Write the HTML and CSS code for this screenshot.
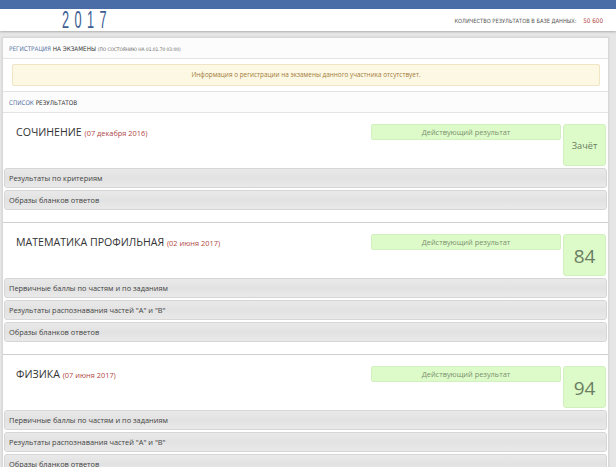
FILE: index.html
```html
<!DOCTYPE html>
<html lang="ru">
<head>
    <meta charset="UTF-8">
    <meta name="viewport" content="width=device-width, initial-scale=1.0">
    <title>Результаты ЕГЭ 2017</title>
    <link rel="stylesheet" href="styles.css">
</head>
<body>
    <div class="topbar"></div>
    <div class="header">
        <div class="year"><span>2017</span></div>
        <div class="db-count">Количество результатов в базе данных: <span class="num">50 600</span></div>
    </div>

    <div class="panel">
        <div class="section-title"><span class="blue">Регистрация</span> на экзамены <small>(по состоянию на 01.01.70 03:00)</small></div>
        <div class="alert-wrap">
            <div class="alert">Информация о регистрации на экзамены данного участника отсутствует.</div>
        </div>
        <div class="section-title"><span class="blue">Список</span> результатов</div>

        <!-- Сочинение -->
        <div class="exam">
            <div class="exam-top">
                <div class="exam-name">Сочинение <span class="date">(07 декабря 2016)</span></div>
                <div class="status">Действующий результат</div>
                <div class="score small">Зачёт</div>
            </div>
            <div class="exam-row">Результаты по критериям</div>
            <div class="exam-row">Образы бланков ответов</div>
        </div>

        <!-- Математика -->
        <div class="exam">
            <div class="exam-top">
                <div class="exam-name">Математика профильная <span class="date">(02 июня 2017)</span></div>
                <div class="status">Действующий результат</div>
                <div class="score">84</div>
            </div>
            <div class="exam-row">Первичные баллы по частям и по заданиям</div>
            <div class="exam-row">Результаты распознавания частей "А" и "В"</div>
            <div class="exam-row">Образы бланков ответов</div>
        </div>

        <!-- Физика -->
        <div class="exam">
            <div class="exam-top">
                <div class="exam-name">Физика <span class="date">(07 июня 2017)</span></div>
                <div class="status">Действующий результат</div>
                <div class="score">94</div>
            </div>
            <div class="exam-row">Первичные баллы по частям и по заданиям</div>
            <div class="exam-row">Результаты распознавания частей "А" и "В"</div>
            <div class="exam-row">Образы бланков ответов</div>
        </div>
    </div>
</body>
</html>
```

FILE: styles.css
```css
html, body {
    margin: 0;
    overflow: hidden;
}

body {
    background: #e6e6e6;
    font-family: "Open Sans", "Noto Sans", sans-serif;
    color: #333;
}

.topbar {
    height: 9px;
    background: #4a6da7;
}

.header {
    display: flex;
    align-items: center;
    justify-content: space-between;
    height: 22px;
    padding: 0 13px 0 62px;
    background: #fff;
    box-shadow: 0 1px 2px rgba(0, 0, 0, 0.25);
}

.year span {
    display: inline-block;
    padding-top: 2px;
    font-family: "Liberation Sans", Arial, sans-serif;
    font-size: 24px;
    line-height: 20px;
    letter-spacing: 10.3px;
    color: #3e5e93;
    transform: scaleX(0.53);
    transform-origin: left center;
}

.db-count {
    font-family: "DejaVu Sans Condensed", "Liberation Sans Narrow", sans-serif;
    font-size: 5.7px;
    text-transform: uppercase;
    color: #555;
}

.db-count .num {
    margin-left: 5px;
    color: #b0463f;
    font-size: 6.3px;
}

.panel {
    margin: 6px 7px 0 2px;
    background: #fff;
    border: 1px solid #d8d8d8;
    border-bottom: none;
    box-shadow: 0 0 2px rgba(0, 0, 0, 0.1);
}

.section-title {
    height: 20px;
    line-height: 21px;
    padding-left: 6px;
    font-family: "DejaVu Sans Condensed", "Liberation Sans Narrow", sans-serif;
    font-size: 6.3px;
    text-transform: uppercase;
    color: #333;
    border-bottom: 1px solid #e4e4e4;
    background: #fcfcfc;
}

.section-title .blue {
    color: #5b77a6;
}

.section-title small {
    font-size: 4.8px;
    color: #666;
}

.alert-wrap {
    padding: 5px 8px 5px 9px;
    border-bottom: 1px solid #e4e4e4;
}

.alert {
    height: 22px;
    line-height: 20px;
    text-align: center;
    font-size: 6.4px;
    color: #a27b3a;
    background: #fcf8e3;
    border: 1px solid #efe4c3;
    border-radius: 2px;
    box-sizing: border-box;
}

.exam {
    padding: 11px 1px 12px 1px;
    border-bottom: 1px solid #cfcfcf;
}

.exam-top {
    display: flex;
    align-items: flex-start;
    height: 42px;
    margin-bottom: 2px;
    padding-right: 1px;
}

.exam-name {
    flex: 1;
    padding: 1px 0 0 12px;
    font-size: 10.6px;
    text-transform: uppercase;
    color: #333;
}

.exam-name .date {
    font-size: 7.4px;
    text-transform: none;
    color: #b0463f;
}

.status {
    width: 190px;
    height: 16px;
    line-height: 15px;
    margin-right: 2px;
    text-align: center;
    font-size: 7.4px;
    color: #7c8f70;
    background: #dcfbc9;
    border: 1px solid #d2f0bf;
    border-radius: 2px;
    box-sizing: border-box;
}

.score {
    width: 43px;
    height: 42px;
    line-height: 42px;
    text-align: center;
    font-size: 19px;
    color: #6c7d62;
    background: #dcfbc9;
    border: 1px solid #d2f0bf;
    border-radius: 3px;
    box-sizing: border-box;
}

.score.small {
    font-size: 9.2px;
}

.exam-row {
    height: 20px;
    line-height: 19px;
    margin-bottom: 2px;
    padding-left: 4px;
    font-size: 7.4px;
    color: #444;
    background: linear-gradient(#e9e9e9, #e2e2e2 50%, #e9e9e9);
    border: 1px solid #d6d6d6;
    border-radius: 3px;
    box-sizing: border-box;
}

.exam-row:last-child {
    margin-bottom: 0;
}
```
